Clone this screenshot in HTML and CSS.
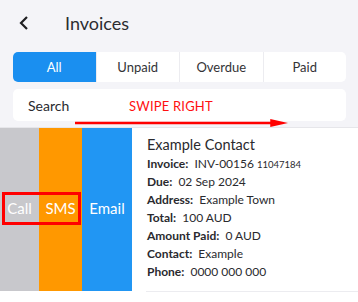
FILE: index.html
```html
<!DOCTYPE HTML>
<html>
<head>
    <meta name="viewport" content="width = device-width, user-scalable=0">
    <title>Invoices</title>
    <link rel="stylesheet" href="styles.css">
</head>
<body>
<div class="screen">
    <div class="header">
        <svg class="back" viewBox="0 0 10 14">
            <path d="M 8,1 L 2,7 L 8,13"/>
        </svg>
        <h1>Invoices</h1>
    </div>

    <div class="tabs">
        <div class="tab active">All</div>
        <div class="tab">Unpaid</div>
        <div class="tab">Overdue</div>
        <div class="tab">Paid</div>
    </div>

    <div class="search">Search</div>

    <div class="hint">
        <span class="hint-text">SWIPE RIGHT</span>
        <svg class="hint-arrow" viewBox="0 0 216 8">
            <path class="line" d="M 0,4 L 200,4"/>
            <path class="head" d="M 198,0 L 216,4 L 198,8 Z"/>
        </svg>
    </div>

    <div class="list">
        <div class="row">
            <div class="action call">Call</div>
            <div class="action sms">SMS</div>
            <div class="action email">Email</div>
            <div class="marker"></div>
            <div class="card">
                <div class="name">Example Contact</div>
                <div class="line"><b>Invoice:</b> INV-00156 <small>11047184</small></div>
                <div class="line"><b>Due:</b> 02 Sep 2024</div>
                <div class="line"><b>Address:</b> Example Town</div>
                <div class="line"><b>Total:</b> 100 AUD</div>
                <div class="line"><b>Amount Paid:</b> 0 AUD</div>
                <div class="line"><b>Contact:</b> Example</div>
                <div class="line"><b>Phone:</b> 0000 000 000</div>
            </div>
        </div>
        <div class="sep"></div>
    </div>
</div>
</body>
</html>
```

FILE: styles.css
```css
body, html {
    background-color: #f4f4f8;
    width: 100%;
    height: 100%;
    padding: 0;
    margin: 0;
    color: #2a2a2e;
    font-family: "Lato", "Open Sans", sans-serif;
    overflow: hidden;
}

.screen {
    position: relative;
    display: flex;
    flex-direction: column;
    height: 100%;
}

.header {
    display: flex;
    align-items: center;
    height: 45px;
    padding-left: 19px;
}

.back {
    width: 10px;
    height: 14px;
    margin-top: 1px;
    fill: none;
    stroke: #1f1f22;
    stroke-width: 2.2;
}

h1 {
    margin: 0 0 0 36px;
    font-size: 18px;
    font-weight: 400;
    color: #2c2c30;
}

.tabs {
    display: flex;
    margin: 7px 12px 0 13px;
    height: 30px;
    background: #ffffff;
    border-radius: 5px;
    overflow: hidden;
}

.tab {
    flex: 1;
    display: flex;
    align-items: center;
    justify-content: center;
    font-size: 13px;
    color: #333336;
    border-left: 1px solid #ececf0;
}

.tab:first-child {
    border-left: none;
}

.tab.active {
    background: #1a8ff0;
    color: #ffffff;
}

.search {
    margin: 7px 12px 0 13px;
    height: 32px;
    background: #ffffff;
    border-radius: 5px;
    padding-left: 15px;
    display: flex;
    align-items: center;
    font-size: 14px;
    color: #2a2a2e;
}

.hint {
    position: absolute;
    left: 75px;
    top: 98px;
    width: 216px;
}

.hint-text {
    display: block;
    margin-left: 54px;
    font-size: 13px;
    color: #ff1010;
    letter-spacing: 0.2px;
}

.hint-arrow {
    display: block;
    width: 213px;
    height: 8px;
    margin-top: 5px;
}

.hint-arrow .line {
    stroke: #ff0000;
    stroke-width: 2.5;
}

.hint-arrow .head {
    fill: #ff0000;
}

.list {
    margin-top: 6px;
    flex: 1;
    background: #ffffff;
    border-top: 1px solid #e6e6ea;
}

.row {
    position: relative;
    display: flex;
    height: 163px;
}

.action {
    display: flex;
    align-items: center;
    justify-content: center;
    padding-bottom: 3px;
    color: #ffffff;
    font-size: 15px;
}

.call {
    width: 39px;
    background: #c8c8cc;
}

.sms {
    width: 43px;
    background: #ff9800;
}

.email {
    width: 50px;
    background: #2196f3;
}

.marker {
    position: absolute;
    left: 2px;
    top: 64px;
    width: 73px;
    height: 27px;
    border: 3px solid #ff0000;
}

.card {
    flex: 1;
    padding: 8px 0 0 15px;
}

.name {
    font-size: 14.5px;
    color: #2a2a2e;
    margin-bottom: 2px;
}

.line {
    font-size: 12px;
    height: 18px;
    line-height: 18px;
    color: #2a2a2e;
}

.line b {
    font-weight: 700;
    margin-right: 3px;
}

.line small {
    font-size: 9.5px;
}

.sep {
    margin-left: 146px;
    border-top: 1px solid #ececf0;
}
```
